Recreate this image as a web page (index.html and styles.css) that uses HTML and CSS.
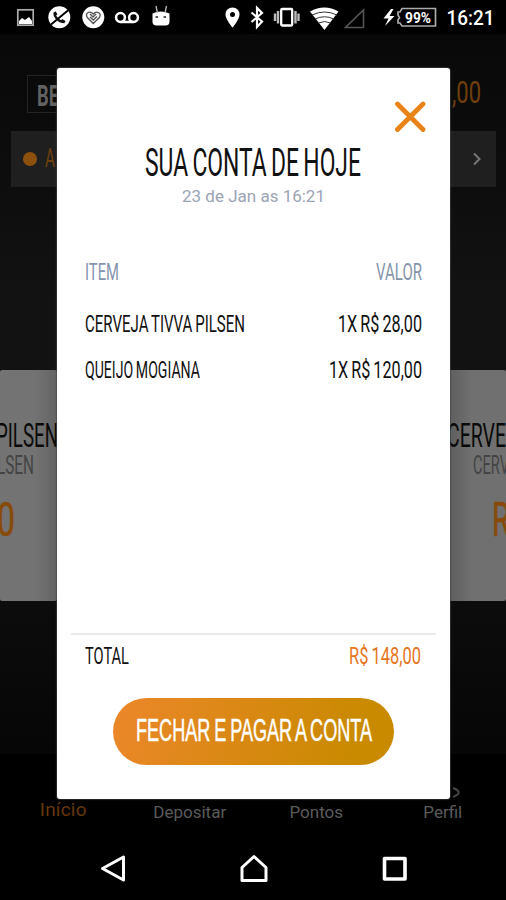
FILE: index.html
```html
<!DOCTYPE html>
<html lang="pt-BR">
<head>
<meta charset="utf-8">
<meta name="viewport" content="width=device-width">
<title>Sua conta de hoje</title>
<link rel="stylesheet" href="styles.css">
</head>
<body>
<div class="phone">
  <header class="status">
    <svg class="status-icons" width="506" height="34" viewBox="0 0 506 34">
      <rect x="17.8" y="9.8" width="15.4" height="15.4" fill="none" stroke="#aaa" stroke-width="1.7"/>
      <path d="M19 24v-3l3-3 3 2 4-3 3 4v3z" fill="#fff"/>
      <circle cx="59.3" cy="17.3" r="11" fill="#fff"/>
      <path d="M54.500 12.500c0 5 4.500 9.500 10 9.500M54.500 12l2 3M61.500 20l3.500 2" fill="none" stroke="#111" stroke-width="2.4"/>
      <path d="M51 24.500L68.500 10" stroke="#000" stroke-width="2"/>
      <circle cx="93.300" cy="17.300" r="11" fill="#fff"/>
      <path d="M93.300 23.500l-6-6c-3-5 3-7 6-3.500 3-3.500 9-1.500 6 3.500zM90 17l3.300 3 3.700-3.500M90 14l3 3 3-3" fill="none" stroke="#555" stroke-width="1.400"/>
      <g fill="none" stroke="#fff" stroke-width="2.500"><circle cx="120.500" cy="17.500" r="4.400"/><circle cx="133.500" cy="17.500" r="4.400"/><path d="M120.500 22h13"/></g>
      <path d="M152.500 13.500q8-4 17 0v8q0 4-4 4h-9q-4 0-4-4z" fill="#fff"/>
      <path d="M156 6l1.500 7M166.500 6l-1.500 7" stroke="#bbb" stroke-width="1.300"/>
      <path d="M155.500 17h2.500M163.500 17h2.500" stroke="#222" stroke-width="1.500"/>
      <path d="M232.500 7.500c-4 0-7 3-7 7 0 5 7 13 7 13s7-8 7-13c0-4-3-7-7-7z" fill="#fff"/><circle cx="232.500" cy="14.500" r="2.500" fill="#000"/>
      <path d="M251.500 12.500l10.500 9-5 5.500V8l5 5-10.500 9" fill="none" stroke="#fff" stroke-width="2.200"/>
      <rect x="281.200" y="9" width="11" height="16.500" rx="1" fill="none" stroke="#fff" stroke-width="2.300"/>
      <path d="M278 11v12.500M275 13.500v7.500M295.500 11v12.500M298.500 13.500v7.500" stroke="#bbb" stroke-width="2.400"/>
      <path d="M310 11.500q14.500-8 28.500 0L324.500 30z" fill="#fff"/>
      <path d="M312 15q12.500-6 25 0M315 19q9.500-4.500 19 0M318.500 23q6-3 12 0" stroke="#333" stroke-width="1" fill="none"/>
      <path d="M345.500 27.500h18V10z" fill="none" stroke="#555" stroke-width="1.600"/>
      <path d="M391 9l-7.500 9.500h5l-3.500 7.500 9.500-10h-5l4-7z" fill="#fff"/>
      <path d="M402 8.500h33.500v17.500H402l-2-3h-2v-3l1.500-2.500L398 15v-3h2z" fill="none" stroke="#aaa" stroke-width="1.700"/>
      <text class="battery" x="405" y="22.500" textLength="26" lengthAdjust="spacingAndGlyphs">99%</text>
      <text class="clock" x="446.500" y="24.500" textLength="48" lengthAdjust="spacingAndGlyphs">16:21</text>
    </svg>
  </header>

  <main class="screen">
    <div class="topbar">
      <div class="logo"><svg class="cond logo-text" width="22" height="21.500"><text y="21.500" textLength="22" lengthAdjust="spacingAndGlyphs">BE</text></svg></div>
      <svg class="cond balance" width="29" height="22.500"><text y="22.500" textLength="29" lengthAdjust="spacingAndGlyphs">,00</text></svg>
    </div>
    <div class="strip">
      <div class="strip-label"><i class="dot"></i><svg class="cond strip-text" width="10" height="18"><text y="18" textLength="10" lengthAdjust="spacingAndGlyphs">A</text></svg></div>
      <svg width="10" height="14" viewBox="0 0 10 14"><path d="M2 1.500L7.500 7 2 12.500" fill="none" stroke="#777" stroke-width="2"/></svg>
    </div>
    <div class="cards">
      <article class="card card-left">
        <svg class="cond name" width="62" height="24.500"><text y="24.500" textLength="62" lengthAdjust="spacingAndGlyphs">PILSEN</text></svg>
        <svg class="cond kind" width="37" height="18.500"><text y="18.500" textLength="37" lengthAdjust="spacingAndGlyphs">LSEN</text></svg>
        <svg class="cond price" width="18" height="34.500"><text y="34.500" textLength="18" lengthAdjust="spacingAndGlyphs">0</text></svg>
      </article>
      <article class="card card-right">
        <svg class="cond name" width="59" height="24.500"><text y="24.500" textLength="59" lengthAdjust="spacingAndGlyphs">CERVE</text></svg>
        <svg class="cond kind" width="36" height="18.500"><text y="18.500" textLength="36" lengthAdjust="spacingAndGlyphs">CERV</text></svg>
        <svg class="cond price" width="18" height="34.500"><text y="34.500" textLength="18" lengthAdjust="spacingAndGlyphs">R</text></svg>
      </article>
    </div>
  </main>

  <nav class="tabs">
    <span class="tab active">Início</span>
    <span class="tab">Depositar</span>
    <span class="tab">Pontos</span>
    <span class="tab">Perfil<svg class="tab-icon" width="8" height="12" viewBox="0 0 8 12"><path d="M1 1c6 2 7 5 4 7l-4 2" fill="none" stroke="#444" stroke-width="2"/></svg></span>
  </nav>

  <footer class="system">
    <svg width="28" height="30" viewBox="0 0 28 30"><path d="M24.500 3v23L3.500 14.500z" fill="none" stroke="#fff" stroke-width="3" stroke-linejoin="round"/></svg>
    <svg width="30" height="30" viewBox="0 0 30 30"><path d="M3 26.500V13.500L15 2.500l12 11v13z" fill="none" stroke="#fff" stroke-width="3" stroke-linejoin="round"/></svg>
    <svg width="28" height="30" viewBox="0 0 28 30"><rect x="3.500" y="4.500" width="20.500" height="20.500" fill="none" stroke="#fff" stroke-width="3.600" stroke-linejoin="round"/></svg>
  </footer>

  <section class="modal">
    <svg class="close" width="32" height="32" viewBox="0 0 32 32"><path d="M3.500 3l25.500 25.500M29 3L3.500 28.500" stroke="#e98317" stroke-width="4.800" stroke-linecap="round"/></svg>
    <svg class="cond title" width="216" height="27"><text y="27" textLength="216" lengthAdjust="spacingAndGlyphs">SUA CONTA DE HOJE</text></svg>
    <p class="date">23 de Jan as 16:21</p>
    <div class="row head">
      <svg class="cond" width="34" height="17.500"><text y="17.500" textLength="34" lengthAdjust="spacingAndGlyphs">ITEM</text></svg>
      <svg class="cond" width="46" height="17.500"><text y="17.500" textLength="46" lengthAdjust="spacingAndGlyphs">VALOR</text></svg>
    </div>
    <div class="row">
      <svg class="cond" width="160" height="17.500"><text y="17.500" textLength="160" lengthAdjust="spacingAndGlyphs">CERVEJA TIVVA PILSEN</text></svg>
      <svg class="cond" width="84" height="17.500"><text y="17.500" textLength="84" lengthAdjust="spacingAndGlyphs">1X R$ 28,00</text></svg>
    </div>
    <div class="row">
      <svg class="cond" width="115" height="17.500"><text y="17.500" textLength="115" lengthAdjust="spacingAndGlyphs">QUEIJO MOGIANA</text></svg>
      <svg class="cond" width="93" height="17.500"><text y="17.500" textLength="93" lengthAdjust="spacingAndGlyphs">1X R$ 120,00</text></svg>
    </div>
    <div class="total">
      <svg class="cond" width="44" height="17.500"><text y="17.500" textLength="44" lengthAdjust="spacingAndGlyphs">TOTAL</text></svg>
      <svg class="cond amount" width="72" height="17.500"><text y="17.500" textLength="72" lengthAdjust="spacingAndGlyphs">R$ 148,00</text></svg>
    </div>
    <button class="pay"><svg class="cond pay-text" width="236" height="22.500"><text y="22.500" textLength="236" lengthAdjust="spacingAndGlyphs">FECHAR E PAGAR A CONTA</text></svg></button>
  </section>
</div>
</body>
</html>
```
FILE: styles.css
```css
* { box-sizing: border-box; }
body { margin: 0; background: #000; font-family: Roboto, "Liberation Sans", sans-serif; }
svg { display: block; flex: none; }
.phone { position: relative; display: flex; flex-direction: column; width: 506px; height: 900px; overflow: hidden; background: #000; }
.status { height: 34px; }
.battery { font-size: 15px; font-weight: 700; fill: #fff; }
.clock { font-size: 20px; font-weight: 500; fill: #fff; }

/* Condensed capitals: each box is exactly one cap height tall */
.cond { overflow: visible; fill: #111; font-size: 24.6px; font-weight: 400; word-spacing: -.06em; }

.screen { height: 720px; background: linear-gradient(#090909 0, #0b0b0b 90px, #121212 260px, #121212 340px, #0c0c0c 570px, #060606 720px); }
.topbar { display: flex; justify-content: space-between; height: 97px; padding: 41px 25px 0 27px; }
.logo { width: 60px; height: 38px; padding: 8px 0 0 9px; border: 1px solid #242424; }
.logo-text { font-size: 30px; font-weight: 700; fill: #626262; }
.balance { margin-top: 4.500px; font-size: 31px; fill: #70400d; }
.strip { display: flex; justify-content: space-between; align-items: center; height: 56px; margin: 0 10px 0 11px; padding: 0 14px 0 12px; background: #1f1f1f; }
.strip-label { display: flex; align-items: center; gap: 8px; }
.dot { width: 14px; height: 14px; border-radius: 50%; background: #8d500d; }
.strip-text { margin-top: -2px; font-size: 25px; fill: #70400d; }

.cards { display: flex; justify-content: space-between; margin-top: 183px; }
.card { display: flex; flex-direction: column; width: 57px; height: 231px; padding-top: 51.500px; border-radius: 2px; overflow: hidden; }
.card-left { align-items: flex-start; background: linear-gradient(90deg, #737373 60%, #646464); }
.card-right { align-items: flex-end; background: linear-gradient(90deg, #5e5e5e, #707070 40%); }
.name { font-size: 34px; fill: #0a0a0a; }
.kind { margin-top: 9px; font-size: 26px; fill: #444; }
.price { margin-top: 27px; font-size: 48px; fill: #884a09; stroke: #884a09; stroke-width: .6px; }
.card-left .name { margin-left: -4px; }
.card-left .kind { margin-left: -3px; }
.card-left .price { margin-left: -3px; }
.card-right .kind { margin-right: -3px; }
.card-right .price { margin-right: -4px; }

.tabs { display: grid; grid-template-columns: repeat(4, 126.500px); height: 82px; padding-top: 48px; background: #000; }
.tab { position: relative; color: #5b5b5b; font-size: 17px; line-height: 20px; text-align: center; }
.tab.active { margin-top: -3px; color: #653609; font-size: 19px; line-height: 22px; letter-spacing: .2px; }
.tab-icon { position: absolute; top: -15px; right: 46px; }

.system { display: flex; justify-content: space-between; padding: 18px 97px 0 99px; }

.modal { position: absolute; left: 57px; top: 68px; display: flex; flex-direction: column; width: 393px; height: 731px; padding: 33px 14px; border-radius: 3px; background: #fff; box-shadow: 0 0 1px 1px rgba(70, 70, 70, .6); }
.close { align-self: flex-end; margin-right: 10px; }
.title { margin: 15.500px 0 0 74px; font-size: 38px; }
.date { margin: 10px 0 56.500px; color: #9ba4b5; font-size: 17px; line-height: 20px; text-align: center; }
.row { display: flex; justify-content: space-between; margin: 0 14px 28.500px; }
.row.head { margin-bottom: 34.500px; }
.head .cond { fill: #8495ad; }
.total { display: flex; justify-content: space-between; height: 34px; margin-top: auto; padding: 11px 15px 0 14px; border-top: 2px solid #ebebeb; }
.total .amount { fill: #e6761c; }
.pay { display: flex; justify-content: center; align-self: center; width: 281px; height: 67px; margin: 31px 0 1px; padding: 19.500px 0 0; border: 0; border-radius: 34px; background: linear-gradient(110deg, #ea8728 5%, #c98a00 85%); }
.pay-text { font-size: 31.600px; fill: #fff; stroke: #fff; stroke-width: .5px; }
```
